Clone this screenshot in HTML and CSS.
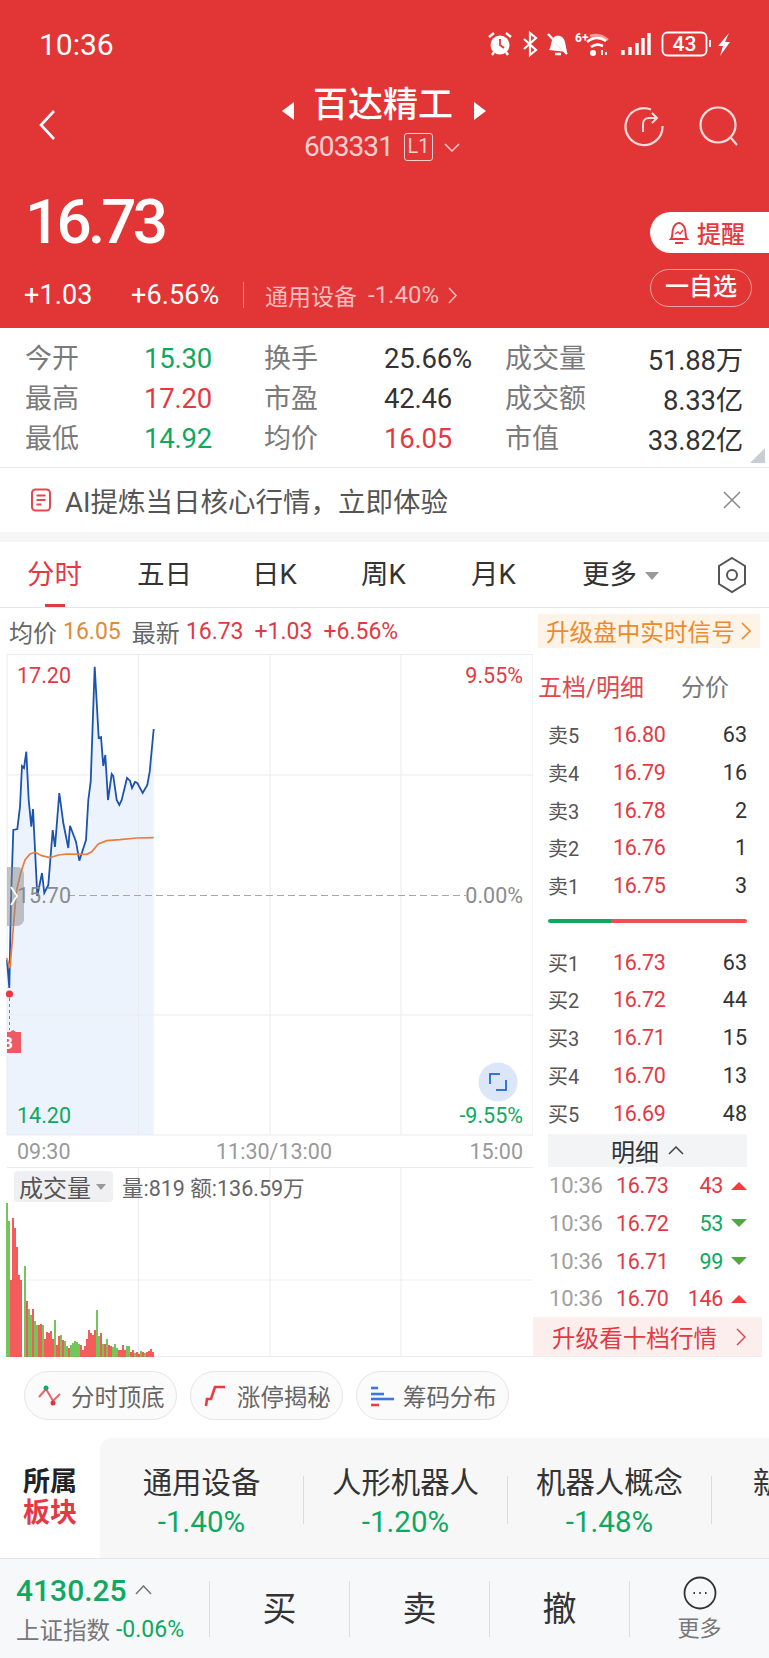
FILE: index.html
```html
<!DOCTYPE html>
<html lang="zh-CN">
<head>
  <meta charset="UTF-8" />
  <meta name="viewport" content="width=device-width, initial-scale=1.0" />
  <title>百达精工</title>
  <link rel="stylesheet" href="styles.css">
</head>
<body>
  <header class="top">
    <div class="status">
      <span class="clock">10:36</span>
      <svg class="status-icons" width="245" height="28" viewBox="488 30 245 28" fill="none" stroke="#fff" stroke-width="2.4">
        <!-- alarm -->
        <circle cx="500" cy="45" r="9.500" fill="#fff" stroke="none"/>
        <path d="M500 39v6l4 3" stroke="#e23636" stroke-width="1.800"/>
        <path d="M489 37l5-4M511 37l-5-4M492 55l2-3M508 55l-2-3"/>
        <!-- bluetooth -->
        <path d="M524 39l12 11-6 5V33l6 5-12 11" stroke-width="2.200"/>
        <!-- bell off -->
        <path d="M549 50c3-3 1-12 7-14 5-1 8 2 9 6l2 10z" fill="#fff" stroke="none"/>
        <path d="M549 35l18 20" stroke="#e23636" stroke-width="1.200"/>
        <path d="M548 34l19 20M555 54h6"/>
        <!-- wifi -->
        <text x="575" y="42" class="status-six">6+</text>
        <path d="M590 36c6-2 12-1 18 4" stroke="#f59a9a" stroke-width="2.800"/>
        <path d="M587 42c6-5 13-5 19-1M591 47c4-3 8-3 12-1" stroke-width="2.600"/>
        <circle cx="593" cy="53" r="3" fill="#fff" stroke="none"/>
        <path d="M602 50v5M606 52v3" stroke-width="1.800"/>
        <!-- signal -->
        <path d="M623 50v5M630 47v8M637 43v12M643 38v17M649 33v22" stroke-width="3.400"/>
        <!-- battery -->
        <rect x="662.500" y="32.500" width="44" height="23" rx="5" stroke-width="1.800"/>
        <text x="684.500" y="51" class="status-batt">43</text>
        <path d="M710 40v7" stroke-width="2"/>
        <path d="M729 33l-11 13h5l-3 10 10-14h-5z" fill="#fff" stroke="none"/>
      </svg>
    </div>

    <div class="nav">
      <svg class="nav-back" width="18" height="32" viewBox="0 0 18 32" fill="none" stroke="#fff" stroke-width="2.6"><path d="M16 2L3 16l13 14"/></svg>
      <div class="nav-title">
        <div class="nav-name"><i class="tri-left"></i><span>百达精工</span><i class="tri-right"></i></div>
        <div class="nav-code"><span>603331</span><b class="badge-l1">L1</b>
          <svg width="16" height="9" viewBox="0 0 16 9" fill="none" stroke="#f6c9c9" stroke-width="1.5"><path d="M1 1l7 7 7-7"/></svg>
        </div>
      </div>
      <div class="nav-tools">
        <svg width="42" height="42" viewBox="0 0 42 42" fill="none" stroke="#f9dcdc" stroke-width="2.2"><path d="M28 4.500A18.500 18.500 0 1 0 39.500 21"/><path d="M20 27v-8c0-4 3-6 6-6h8M29 8l5 5-5 5" stroke-width="2"/></svg>
        <svg width="44" height="44" viewBox="0 0 44 44" fill="none" stroke="#f9dcdc" stroke-width="2.2"><circle cx="20" cy="20" r="17.500"/><path d="M33 33l6 7"/></svg>
      </div>
    </div>

    <div class="quote">
      <div class="quote-left">
        <div class="price">16.73</div>
        <div class="change">
          <span class="change-abs">+1.03</span>
          <span class="change-pct">+6.56%</span>
          <i class="change-sep"></i>
          <span class="change-sector">通用设备</span>
          <span class="change-sector-pct">-1.40%</span>
          <svg width="9" height="17" viewBox="0 0 9 17" fill="none" stroke="#f6c0c0" stroke-width="1.5"><path d="M1 1l7 7.500L1 16"/></svg>
        </div>
      </div>
      <div class="quote-right">
        <div class="pill-remind">
          <svg width="22" height="24" viewBox="0 0 22 24" fill="none" stroke="#e23a3f" stroke-width="2"><path d="M3 18c2-2 1-7 2-10 1-4 4-6 6-6s5 2 6 6c1 3 0 8 2 10z"/><path d="M7 22h8"/><path d="M7 13l3-2 2 2 3-4" stroke-width="1.4"/></svg>
          <span>提醒</span>
        </div>
        <div class="pill-watch">一自选</div>
      </div>
    </div>
  </header>

  <section class="stats">
    <span class="lbl">今开</span><span class="num green">15.30</span>
    <span class="lbl">换手</span><span class="num">25.66%</span>
    <span class="lbl">成交量</span><span class="num end">51.88万</span>
    <span class="lbl">最高</span><span class="num red">17.20</span>
    <span class="lbl">市盈</span><span class="num">42.46</span>
    <span class="lbl">成交额</span><span class="num end">8.33亿</span>
    <span class="lbl">最低</span><span class="num green">14.92</span>
    <span class="lbl">均价</span><span class="num red">16.05</span>
    <span class="lbl">市值</span><span class="num end">33.82亿</span>
    <i class="stats-corner"></i>
  </section>

  <section class="ai-tip">
    <svg width="22" height="24" viewBox="0 0 22 24" fill="none" stroke="#e4474d" stroke-width="2"><rect x="2" y="1.500" width="18" height="21" rx="3.500"/><path d="M6.500 7.500h9M6.500 12h9M6.500 16.500h5"/></svg>
    <span class="ai-text">AI提炼当日核心行情，立即体验</span>
    <svg class="ai-close" width="20" height="20" viewBox="0 0 20 20" fill="none" stroke="#8a8a8a" stroke-width="1.6"><path d="M2 2l16 16M18 2L2 18"/></svg>
  </section>

  <nav class="tabs">
    <span class="tab active">分时</span>
    <span class="tab">五日</span>
    <span class="tab">日K</span>
    <span class="tab">周K</span>
    <span class="tab">月K</span>
    <span class="tab">更多<i class="tab-caret"></i></span>
    <svg width="30" height="38" viewBox="0 0 30 38" fill="none" stroke="#555" stroke-width="2"><path d="M15 2l13 8v18l-13 8-13-8V10z"/><circle cx="15" cy="19" r="5"/></svg>
  </nav>

  <div class="info">
    <span class="info-lbl">均价</span><span class="info-num orange">16.05</span>
    <span class="info-lbl gap-left">最新</span><span class="info-num red">16.73</span>
    <span class="info-num red gap-more">+1.03</span>
    <span class="info-num red gap-more">+6.56%</span>
    <span class="info-promo">升级盘中实时信号
      <svg width="10" height="18" viewBox="0 0 10 18" fill="none" stroke="#ee8a2c" stroke-width="1.6"><path d="M1 1l8 8-8 8"/></svg>
    </span>
  </div>

  <main class="board">
    <div class="charts">
      <svg class="chart-price" width="533" height="482" viewBox="0 654 533 482">
        <path class="fill" d="M7 960L9.300 988 11 900 13.300 830 17.300 829 20 806.700 22 766 24 768 26.300 751.700 28.700 800 31.300 826.700 33 809 37.300 896 42 873 44.300 893 48.300 885 52.700 830 55 847 59.300 793 63.300 823 68.300 848 70 825.700 76 841.700 79.300 860.700 86 840 88.300 800 90.700 781.700 94.700 666.700 98.700 738 101 737 103.300 766 105.300 755 108 800 111.700 774 113.300 776 116.700 800 119.300 805 121.700 800 127 778 130 780.700 132 788 135 782 137.300 783 142.700 793 147.300 785 149.700 771.700 153.700 729V1135H7z"/>
        <path class="grid" d="M7 654.500H533M7 775H533M7 1015H533M7 1135H533M7 654V1135M138.500 654V1135M270 654V1135M401 654V1135M533 654V1135"/>
        <path class="mid" d="M68 895.500H466"/>
        <path class="line-blue" d="M7 960L9.300 988 11 900 13.300 830 17.300 829 20 806.700 22 766 24 768 26.300 751.700 28.700 800 31.300 826.700 33 809 37.300 896 42 873 44.300 893 48.300 885 52.700 830 55 847 59.300 793 63.300 823 68.300 848 70 825.700 76 841.700 79.300 860.700 86 840 88.300 800 90.700 781.700 94.700 666.700 98.700 738 101 737 103.300 766 105.300 755 108 800 111.700 774 113.300 776 116.700 800 119.300 805 121.700 800 127 778 130 780.700 132 788 135 782 137.300 783 142.700 793 147.300 785 149.700 771.700 153.700 729"/>
        <path class="line-orange" d="M6.700 958L10 968 15 907 16.700 890 20.700 873 25 860 30 854 35 852.300 41.700 855.700 50 857.700 58.300 855 66.700 854 86.700 854.300 91.700 851.700 98.300 844 106.700 840.700 120 839.700 136.700 838 153.700 837.700"/>
        <text x="17" y="683" class="axis red-fill">17.20</text>
        <text x="523" y="683" class="axis red-fill" text-anchor="end">9.55%</text>
        <text x="17" y="903" class="axis grey-fill">15.70</text>
        <text x="523" y="903" class="axis grey-fill" text-anchor="end">0.00%</text>
        <text x="17" y="1123" class="axis green-fill">14.20</text>
        <text x="523" y="1123" class="axis green-fill" text-anchor="end">-9.55%</text>
        <path d="M7 867h10a7 7 0 0 1 7 7v45a7 7 0 0 1-7 7H7z" fill="#8a8a8a" opacity=".5"/>
        <path d="M11 887l6 9-6 9" fill="none" stroke="#fff" stroke-width="1.8"/>
        <path d="M9.500 998V1030" stroke="#e8505b" stroke-width="1" stroke-dasharray="3 3"/>
        <circle cx="9.500" cy="994" r="3.600" fill="#f0363f"/>
        <path d="M7 1032h3l3-2 3 2h5v21H7z" fill="#ee5a64"/>
        <text x="2" y="1049" class="tag-b">B</text>
        <circle cx="498" cy="1082" r="19.500" fill="#dbe6f8"/>
        <path d="M490 1084v-10h10M506 1080v10h-10" fill="none" stroke="#3a72dc" stroke-width="2"/>
      </svg>

      <div class="axis-row"><span>09:30</span><span class="axis-mid">11:30/13:00</span><span>15:00</span></div>

      <div class="volume">
        <svg class="chart-vol" width="533" height="190" viewBox="0 1167 533 190">
          <path class="grid" d="M7 1167.500H533M7 1280H533M7 1356.500H533M138.500 1167V1357M270 1167V1357M401 1167V1357"/>
          <path class="bars-green" d="M7 1357V1203M9 1357V1221M25 1357V1266M29 1357V1309M31 1357V1315M35 1357V1321M37 1357V1325M43 1357V1325M55 1357V1320M61 1357V1335M65 1357V1341M67 1357V1346M71 1357V1345M73 1357V1343M75 1357V1341M77 1357V1342M79 1357V1344M97 1357V1310M99 1357V1336M103 1357V1344M107 1357V1339M113 1357V1347M115 1357V1344M117 1357V1348M127 1357V1346M129 1357V1346M135 1357V1353M141 1357V1351M145 1357V1353"/>
          <path class="bars-red" d="M11 1357V1280M13 1357V1218M15 1357V1228M17 1357V1247M19 1357V1275M21 1357V1280M27 1357V1301M33 1357V1309M39 1357V1325M41 1357V1324M45 1357V1339M47 1357V1332M49 1357V1333M51 1357V1331M53 1357V1339M57 1357V1345M59 1357V1336M63 1357V1340M69 1357V1348M81 1357V1345M83 1357V1350M85 1357V1346M87 1357V1339M89 1357V1330M91 1357V1333M93 1357V1335M95 1357V1330M101 1357V1333M105 1357V1344M109 1357V1345M111 1357V1346M119 1357V1350M121 1357V1350M123 1357V1345M125 1357V1350M131 1357V1352M133 1357V1350M137 1357V1352M139 1357V1354M143 1357V1352M147 1357V1352M149 1357V1351M151 1357V1349M153 1357V1352"/>
        </svg>
        <div class="vol-head">
          <span class="vol-select">成交量<i class="vol-caret"></i></span>
          <span class="vol-text">量:819 额:136.59万</span>
        </div>
      </div>
    </div>

    <aside class="side">
      <div class="side-head"><span class="side-active">五档/明细</span><span class="side-alt">分价</span></div>
      <div class="book">
        <div class="book-row"><span class="book-lbl">卖5</span><span class="book-price">16.80</span><span class="book-qty">63</span></div>
        <div class="book-row"><span class="book-lbl">卖4</span><span class="book-price">16.79</span><span class="book-qty">16</span></div>
        <div class="book-row"><span class="book-lbl">卖3</span><span class="book-price">16.78</span><span class="book-qty">2</span></div>
        <div class="book-row"><span class="book-lbl">卖2</span><span class="book-price">16.76</span><span class="book-qty">1</span></div>
        <div class="book-row"><span class="book-lbl">卖1</span><span class="book-price">16.75</span><span class="book-qty">3</span></div>
        <div class="ratio"><i class="ratio-buy" style="width: 31.5%"></i><i class="ratio-sell"></i></div>
        <div class="book-row"><span class="book-lbl">买1</span><span class="book-price">16.73</span><span class="book-qty">63</span></div>
        <div class="book-row"><span class="book-lbl">买2</span><span class="book-price">16.72</span><span class="book-qty">44</span></div>
        <div class="book-row"><span class="book-lbl">买3</span><span class="book-price">16.71</span><span class="book-qty">15</span></div>
        <div class="book-row"><span class="book-lbl">买4</span><span class="book-price">16.70</span><span class="book-qty">13</span></div>
        <div class="book-row"><span class="book-lbl">买5</span><span class="book-price">16.69</span><span class="book-qty">48</span></div>
        <div class="detail-toggle">明细
          <svg width="16" height="9" viewBox="0 0 16 9" fill="none" stroke="#444" stroke-width="1.5"><path d="M1 8l7-7 7 7"/></svg>
        </div>
        <div class="tick"><span class="tick-time">10:36</span><span class="book-price">16.73</span><span class="tick-qty red">43</span><i class="arrow-up"></i></div>
        <div class="tick"><span class="tick-time">10:36</span><span class="book-price">16.72</span><span class="tick-qty green">53</span><i class="arrow-down"></i></div>
        <div class="tick"><span class="tick-time">10:36</span><span class="book-price">16.71</span><span class="tick-qty green">99</span><i class="arrow-down"></i></div>
        <div class="tick"><span class="tick-time">10:36</span><span class="book-price">16.70</span><span class="tick-qty red">146</span><i class="arrow-up"></i></div>
      </div>
      <div class="side-upgrade"><span>升级看十档行情</span>
        <svg width="10" height="18" viewBox="0 0 10 18" fill="none" stroke="#e0484f" stroke-width="1.5"><path d="M1 1l8 8-8 8"/></svg>
      </div>
    </aside>
  </main>

  <div class="chips">
    <span class="chip">
      <svg width="26" height="24" viewBox="0 0 26 24" fill="none" stroke-width="2"><path d="M2 13l7-8 7 12 7-7" stroke="#e8656a"/><circle cx="9" cy="4" r="2.500" fill="#19a866"/><circle cx="16" cy="19" r="2.500" fill="#e4323c"/></svg>
      分时顶底</span>
    <span class="chip">
      <svg width="26" height="24" viewBox="0 0 26 24" fill="none" stroke="#ec3a44" stroke-width="2.600"><path d="M3 22l1-7h4l4-12h10"/></svg>
      涨停揭秘</span>
    <span class="chip">
      <svg width="26" height="24" viewBox="0 0 26 24" fill="none" stroke-width="2.600"><path d="M2 4h7" stroke="#3b78e7"/><path d="M2 10h13" stroke="#3b78e7"/><path d="M2 15h23" stroke="#3b78e7"/><path d="M2 21h8" stroke="#e8404a"/></svg>
      筹码分布</span>
  </div>

  <section class="sectors">
    <div class="sectors-tab"><b>所属</b><b class="red">板块</b></div>
    <div class="sectors-list">
      <div class="sector"><span class="sector-name">通用设备</span><span class="sector-pct">-1.40%</span></div>
      <div class="sector"><span class="sector-name">人形机器人</span><span class="sector-pct">-1.20%</span></div>
      <div class="sector"><span class="sector-name">机器人概念</span><span class="sector-pct">-1.48%</span></div>
      <div class="sector sector-cut"><span class="sector-name">新</span><span class="sector-pct">&nbsp;</span></div>
    </div>
  </section>

  <footer class="bottom">
    <div class="index">
      <div class="index-top"><span class="index-num">4130.25</span>
        <svg width="17" height="10" viewBox="0 0 17 10" fill="none" stroke="#777" stroke-width="1.6"><path d="M1 9l7.500-8L16 9"/></svg>
      </div>
      <div class="index-sub"><span class="index-name">上证指数</span><span class="index-pct">-0.06%</span></div>
    </div>
    <div class="trade">买</div>
    <div class="trade">卖</div>
    <div class="trade">撤</div>
    <div class="more">
      <svg width="34" height="34" viewBox="0 0 34 34" fill="none" stroke="#333" stroke-width="1.800"><circle cx="17" cy="17" r="15.500"/><path d="M10.500 17h1.500M16.300 17h1.500M22 17h1.500" stroke-width="2.200"/></svg>
      <span>更多</span>
    </div>
  </footer>
</body>
</html>
```

FILE: styles.css
```css
* {
  box-sizing: border-box;
}

body {
  margin: 0;
  width: 769px;
  height: 1658px;
  overflow: hidden;
  background: #fff;
  color: #222;
  font-family: Roboto, "Noto Sans CJK SC", sans-serif;
}

i {
  display: block;
}

.red { color: #e23a45; }
.green { color: #0fa860; }
.orange { color: #e08a3c; }

/* red header */
.top {
  height: 328px;
  background: #e23636;
  color: #fff;
}

.status {
  height: 88px;
  padding: 0 36px 0 39px;
  display: flex;
  align-items: center;
  justify-content: space-between;
}

.clock {
  font-size: 30px;
}

.status-six {
  font: 700 12px Roboto, sans-serif;
  fill: #fff;
  stroke: none;
}

.status-batt {
  font: 500 21px Roboto, sans-serif;
  fill: #fff;
  stroke: none;
  text-anchor: middle;
}

.nav {
  height: 73px;
  padding: 0 27px 0 38px;
  display: grid;
  grid-template-columns: 1fr auto 1fr;
  align-items: center;
}

.nav-title {
  margin-left: -12px;
}

.nav-name {
  height: 36px;
  font-size: 35px;
  line-height: 36px;
  font-weight: 500;
  display: flex;
  align-items: center;
  justify-content: center;
  gap: 21px;
}

.tri-left,
.tri-right {
  width: 0;
  height: 0;
  margin-top: 10px;
  border-top: 9px solid transparent;
  border-bottom: 9px solid transparent;
}

.tri-left {
  margin-right: -2px;
  border-right: 12px solid #fff;
}

.tri-right { border-left: 12px solid #fff; }

.nav-code {
  margin-top: 9px;
  padding-right: 4px;
  height: 28px;
  font-size: 28px;
  line-height: 28px;
  letter-spacing: -0.9px;
  color: #f7cfcf;
  display: flex;
  align-items: center;
  justify-content: center;
  gap: 11px;
}

.badge-l1 {
  width: 29px;
  height: 28px;
  border: 1.5px solid #f7cfcf;
  border-radius: 3px;
  font-size: 20px;
  font-weight: 400;
  line-height: 25px;
  letter-spacing: 0;
  text-align: center;
}

.nav-tools {
  display: flex;
  justify-content: flex-end;
  gap: 33px;
  margin-top: 4px;
}

.quote {
  height: 167px;
  display: flex;
  justify-content: space-between;
}

.quote-left {
  padding: 31px 0 0 24px;
}

.price {
  height: 60px;
  padding-left: 1px;
  font-size: 62px;
  line-height: 60px;
  font-weight: 500;
  letter-spacing: -3.8px;
}

.change {
  margin-top: 28px;
  height: 30px;
  display: flex;
  align-items: center;
}

.change-abs,
.change-pct {
  font-size: 27px;
  letter-spacing: 0.1px;
}

.change-abs { width: 107px; }
.change-pct { width: 112px; }

.change-sep {
  width: 1px;
  height: 26px;
  background: #ee8a8a;
  margin-right: 21px;
}

.change-sector {
  font-size: 23px;
  color: #f6bebe;
  width: 103px;
}

.change-sector-pct {
  font-size: 24px;
  color: #f6bebe;
  width: 80px;
  white-space: nowrap;
}

.quote-right {
  width: 119px;
  padding-top: 51px;
}

.pill-remind {
  height: 41px;
  background: #fff;
  border-radius: 21px 0 0 21px;
  color: #e23a3f;
  font-size: 24px;
  font-weight: 500;
  padding-left: 18px;
  display: flex;
  align-items: center;
  gap: 7px;
}

.pill-watch {
  margin-top: 16px;
  width: 102px;
  height: 38px;
  border: 1px solid #f0a0a0;
  border-radius: 19px;
  font-size: 24px;
  font-weight: 500;
  line-height: 35px;
  text-align: center;
}

/* stats */
.stats {
  position: relative;
  height: 140px;
  padding: 10px 26px 0 25px;
  border-bottom: 1px solid #eaeaea;
  display: grid;
  grid-template-columns: 120px 119px 121px 120px 115px 123px;
  grid-auto-rows: 40px;
  align-items: center;
}

.lbl {
  padding-bottom: 4px;
  font-size: 27px;
  color: #7a7a7a;
  white-space: nowrap;
}

.num {
  margin-left: -1px;
  font-size: 27.5px;
  letter-spacing: -0.2px;
  color: #333;
  white-space: nowrap;
}

.num.green { color: #0fa860; }
.num.red { color: #e23a45; }

.num.end {
  text-align: right;
}

.stats-corner {
  position: absolute;
  right: 4px;
  bottom: 4px;
  border-left: 15px solid transparent;
  border-bottom: 15px solid #c9ced3;
}

.ai-tip {
  height: 74px;
  padding: 0 27px 0 30px;
  border-bottom: 10px solid #f6f6f6;
  display: flex;
  align-items: center;
}

.ai-text {
  margin-left: 13px;
  font-size: 27.5px;
  color: #555;
  flex: 1;
  white-space: nowrap;
}

/* tabs */
.tabs {
  height: 66px;
  padding-left: 27px;
  border-bottom: 1px solid #e6e6e6;
  display: grid;
  grid-template-columns: 110px 115px 109px 110px 111px 135px 30px;
  align-items: center;
}

.tab {
  position: relative;
  height: 66px;
  font-size: 27.5px;
  line-height: 66px;
  color: #333;
  display: flex;
  align-items: center;
  gap: 8px;
}

.tab.active {
  color: #e23a45;
}

.tab.active::after {
  content: "";
  position: absolute;
  left: 18px;
  bottom: 1px;
  width: 20px;
  height: 3px;
  background: #e23a45;
}

.tab-caret {
  margin-top: 2px;
  border-left: 7px solid transparent;
  border-right: 7px solid transparent;
  border-top: 8px solid #999;
}

.info {
  height: 46px;
  padding: 0 9px 0 9px;
  display: flex;
  align-items: center;
  white-space: nowrap;
}

.info-lbl {
  font-size: 24px;
  color: #666;
}

.info-num {
  margin-left: 6px;
  font-size: 23px;
}

.gap-left { margin-left: 11px; }
.gap-more { margin-left: 11px; }

.info-promo {
  margin-left: auto;
  height: 34px;
  width: 222px;
  padding-left: 8px;
  background: #fdf3e6;
  color: #ee8a2c;
  font-size: 23.6px;
  display: flex;
  align-items: center;
  gap: 6px;
}

/* charts and order book */
.board {
  height: 704px;
  display: flex;
}

.charts {
  width: 533px;
}

.chart-price,
.chart-vol {
  display: block;
}

.grid {
  fill: none;
  stroke: #e9ebee;
  stroke-width: 1;
}

.fill {
  fill: #edf3fc;
}

.mid {
  fill: none;
  stroke: #a6a6a6;
  stroke-width: 1;
  stroke-dasharray: 7 4;
}

.line-blue {
  fill: none;
  stroke: #1c53ac;
  stroke-width: 1.8;
}

.line-orange {
  fill: none;
  stroke: #ec7b3f;
  stroke-width: 1.7;
}

.axis {
  font-size: 21.5px;
  font-family: Roboto, sans-serif;
}

.red-fill { fill: #e23a45; }
.green-fill { fill: #0fa860; }
.grey-fill { fill: #8b8b8b; }

.tag-b {
  font: 700 17px Roboto, sans-serif;
  fill: #fff;
}

.axis-row {
  height: 31px;
  padding: 0 10px 0 17px;
  display: flex;
  align-items: center;
  justify-content: space-between;
  font-size: 21.5px;
  color: #999;
}

.axis-mid {
  margin-left: 8px;
}

.volume {
  position: relative;
  height: 191px;
}

.vol-head {
  position: absolute;
  left: 14px;
  top: 4px;
  display: flex;
  align-items: center;
  gap: 9px;
}

.vol-select {
  width: 99px;
  height: 31px;
  padding-left: 5px;
  background: #f0f0f2;
  border-radius: 4px;
  font-size: 24px;
  color: #555;
  display: flex;
  align-items: center;
  gap: 5px;
  white-space: nowrap;
}

.vol-caret {
  border-left: 5px solid transparent;
  border-right: 5px solid transparent;
  border-top: 6px solid #999;
}

.vol-text {
  font-size: 21.5px;
  color: #666;
  white-space: nowrap;
}

.bars-green {
  fill: none;
  stroke: #5cbc3f;
  stroke-width: 1.7;
}

.bars-red {
  fill: none;
  stroke: #f2403f;
  stroke-width: 1.7;
}

.side {
  width: 236px;
}

.side-head {
  height: 62px;
  padding-left: 5px;
  display: flex;
  align-items: center;
  font-size: 24px;
}

.side-active {
  width: 143px;
  color: #e0484f;
}

.side-alt {
  color: #777;
}

.book {
  height: 601px;
  padding: 0 22px 0 15px;
}

.book-row,
.tick {
  height: 37.7px;
  display: flex;
  align-items: center;
}

.book-lbl {
  width: 65px;
  font-size: 20px;
  color: #555;
}

.book-price {
  font-size: 21.5px;
  letter-spacing: -0.3px;
  color: #e23a45;
}

.book-qty {
  margin-left: auto;
  font-size: 21.5px;
  color: #333;
}

.ratio {
  margin: 15px 0 20px;
  height: 4px;
  border-radius: 2px;
  overflow: hidden;
  display: flex;
}

.ratio-buy { background: #0fa860; }
.ratio-sell { background: #f04f52; flex: 1; }

.detail-toggle {
  margin-top: 2px;
  height: 33px;
  background: #f2f4f6;
  font-size: 24px;
  color: #333;
  display: flex;
  align-items: center;
  justify-content: center;
  gap: 9px;
}

.tick-time {
  width: 68px;
  padding-left: 1px;
  font-size: 22px;
  letter-spacing: -0.2px;
  color: #a0a0a0;
}

.tick-qty {
  margin-left: auto;
  font-size: 21.5px;
  letter-spacing: -0.3px;
}

.arrow-up,
.arrow-down {
  margin-left: 8px;
  border-left: 8px solid transparent;
  border-right: 8px solid transparent;
}

.arrow-up { border-bottom: 8px solid #f23d3d; }
.arrow-down { border-top: 8px solid #52a83f; }

.side-upgrade {
  height: 40px;
  margin-right: 7px;
  padding: 0 16px 0 19px;
  background: #fdeeee;
  border-bottom: 1px solid #eee;
  color: #e23a45;
  font-size: 23.6px;
  display: flex;
  align-items: center;
  justify-content: space-between;
}

/* chips */
.chips {
  height: 80px;
  padding: 13px 0 0 24px;
  display: flex;
  gap: 13px;
}

.chip {
  width: 153px;
  height: 49px;
  padding-left: 12px;
  border: 1px solid #e5e5e7;
  border-radius: 25px;
  background: #fbfbfb;
  font-size: 23.4px;
  color: #666;
  display: flex;
  align-items: center;
  gap: 8px;
  white-space: nowrap;
}

/* sectors */
.sectors {
  height: 121px;
  border-bottom: 1px solid #e6e6e6;
  display: flex;
}

.sectors-tab {
  width: 100px;
  padding-left: 23px;
  display: flex;
  flex-direction: column;
  justify-content: center;
  font-size: 27px;
  line-height: 31px;
  color: #222;
}

.sectors-list {
  flex: 1;
  height: 120px;
  padding-top: 4px;
  background: #f7f7f8;
  border-radius: 12px 0 0 0;
  overflow: hidden;
  display: flex;
  align-items: center;
}

.sector {
  flex: 0 0 204px;
  height: 48px;
  padding-top: 4px;
  border-right: 1px solid #dcdcdc;
  display: flex;
  flex-direction: column;
  align-items: center;
  justify-content: center;
  white-space: nowrap;
}

.sector-cut {
  border-right: 0;
  align-items: flex-start;
  padding-left: 41px;
}

.sector-name {
  font-size: 29.4px;
  line-height: 40px;
  color: #333;
}

.sector-pct {
  font-size: 29.5px;
  line-height: 38px;
  color: #0fa860;
}

/* bottom bar */
.bottom {
  height: 100px;
  background: #f7f8fa;
  display: flex;
  align-items: center;
}

.index {
  width: 209px;
  padding-left: 16px;
}

.index-top {
  display: flex;
  align-items: center;
  gap: 8px;
  height: 36px;
}

.index-num {
  font-size: 30px;
  font-weight: 500;
  color: #0fa860;
}

.index-sub {
  margin-top: 4px;
  display: flex;
  align-items: center;
  gap: 6px;
  white-space: nowrap;
}

.index-name {
  font-size: 23.5px;
  color: #777;
}

.index-pct {
  font-size: 23px;
  color: #0fa860;
}

.trade {
  width: 140px;
  height: 56px;
  border-left: 1px solid #dcdde0;
  font-size: 34px;
  line-height: 56px;
  text-align: center;
  color: #333;
}

.more {
  flex: 1;
  height: 56px;
  border-left: 1px solid #dcdde0;
  display: flex;
  flex-direction: column;
  align-items: center;
  justify-content: center;
  gap: 6px;
  font-size: 22px;
  line-height: 26px;
  color: #777;
}

.more svg {
  flex: none;
}
```
